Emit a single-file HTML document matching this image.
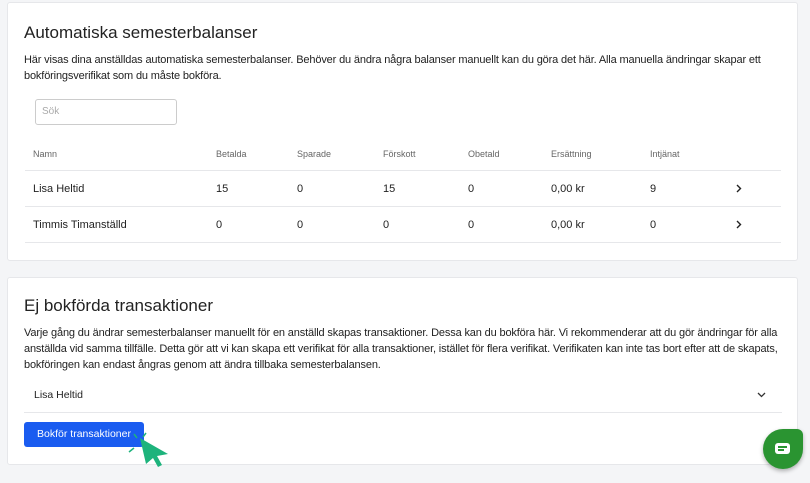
<!DOCTYPE html>
<html><head><style>
body{margin:0;width:810px;height:483px;background:#f4f5f7;font-family:"Liberation Sans",sans-serif;color:#222;position:relative;overflow:hidden}
.card{position:absolute;left:7px;width:789px;background:#fff;border:1px solid #e6e7ea;border-radius:3px}
h2{position:absolute;left:16px;margin:0;font-weight:400;font-size:17px;color:#222}
p{position:absolute;left:16px;margin:0;font-size:11px;line-height:16px;color:#222;width:770px;letter-spacing:-0.15px}
.t{position:absolute;font-size:11px}
.h{font-size:9px;color:#666}
.line{position:absolute;left:17px;width:756px;height:1px;background:#e6e7ea}
.chev{position:absolute;left:728px}
</style></head><body>
<div class="card" style="top:2px;height:257px">
<h2 style="top:20px">Automatiska semesterbalanser</h2>
<p style="top:49px">Här visas dina anställdas automatiska semesterbalanser. Behöver du ändra några balanser manuellt kan du göra det här. Alla manuella ändringar skapar ett bokföringsverifikat som du måste bokföra.</p>
<div style="position:absolute;left:27px;top:96px;width:140px;height:24px;border:1px solid #ccc;border-radius:3px"></div>
<div class="t" style="left:34px;top:103px;color:#aaa;font-size:10px">Sök</div>
<div class="t h" style="left:25px;top:146px">Namn</div>
<div class="t h" style="left:208px;top:146px">Betalda</div>
<div class="t h" style="left:289px;top:146px">Sparade</div>
<div class="t h" style="left:375px;top:146px">Förskott</div>
<div class="t h" style="left:460px;top:146px">Obetald</div>
<div class="t h" style="left:543px;top:146px">Ersättning</div>
<div class="t h" style="left:642px;top:146px">Intjänat</div>
<div class="line" style="top:167px"></div>
<div class="t" style="left:25px;top:180px">Lisa Heltid</div>
<div class="t" style="left:208px;top:180px">15</div><div class="t" style="left:289px;top:180px">0</div><div class="t" style="left:375px;top:180px">15</div><div class="t" style="left:460px;top:180px">0</div><div class="t" style="left:543px;top:180px">0,00 kr</div><div class="t" style="left:642px;top:180px">9</div>
<svg class="chev" style="top:181px" width="6" height="9"><path d="M1 1L4.5 4.5L1 8" stroke="#222" stroke-width="1.4" fill="none"/></svg>
<div class="line" style="top:203px"></div>
<div class="t" style="left:25px;top:216px">Timmis Timanställd</div>
<div class="t" style="left:208px;top:216px">0</div><div class="t" style="left:289px;top:216px">0</div><div class="t" style="left:375px;top:216px">0</div><div class="t" style="left:460px;top:216px">0</div><div class="t" style="left:543px;top:216px">0,00 kr</div><div class="t" style="left:642px;top:216px">0</div>
<svg class="chev" style="top:217px" width="6" height="9"><path d="M1 1L4.5 4.5L1 8" stroke="#222" stroke-width="1.4" fill="none"/></svg>
<div class="line" style="top:239px"></div>
</div>
<div class="card" style="top:277px;height:186px">
<h2 style="top:18px">Ej bokförda transaktioner</h2>
<p style="top:47px;width:770px">Varje gång du ändrar semesterbalanser manuellt för en anställd skapas transaktioner. Dessa kan du bokföra här. Vi rekommenderar att du gör ändringar för alla anställda vid samma tillfälle. Detta gör att vi kan skapa ett verifikat för alla transaktioner, istället för flera verifikat. Verifikaten kan inte tas bort efter att de skapats, bokföringen kan endast ångras genom att ändra tillbaka semesterbalansen.</p>
<div class="t" style="left:26px;top:111px;font-size:10.5px">Lisa Heltid</div>
<svg style="position:absolute;left:749px;top:114px" width="9" height="6"><path d="M1 1L4.5 4.5L8 1" stroke="#333" stroke-width="1.3" fill="none"/></svg>
<div class="line" style="top:134px;left:16px;width:758px"></div>
<div style="position:absolute;left:16px;top:144px;width:120px;height:25px;background:#1a5cf0;border-radius:3px;color:#fff;font-size:10.5px;line-height:25px;text-align:center">Bokför transaktioner</div>
</div>
<svg style="position:absolute;left:126px;top:432px" width="46" height="40"><path d="M14 6L42 22L31 24L36 33L32 35L27 26L20 32Z" fill="#1db37c"/><path d="M8 2L11 6M20 1L17 5M3 20L8 16" stroke="#1db37c" stroke-width="1.5"/></svg>
<div style="position:absolute;left:763px;top:429px;width:40px;height:40px;background:#2a9431;border-radius:20px 6px 20px 20px;box-shadow:0 2px 4px rgba(0,0,0,.3)"></div>
<div style="position:absolute;left:775px;top:443px;width:15px;height:11px;background:#fff;border-radius:3px"></div>
<div style="position:absolute;left:778px;top:446px;width:9px;height:1.5px;background:#2a9431"></div>
<div style="position:absolute;left:778px;top:449px;width:6px;height:1.5px;background:#2a9431"></div>
</body></html>
